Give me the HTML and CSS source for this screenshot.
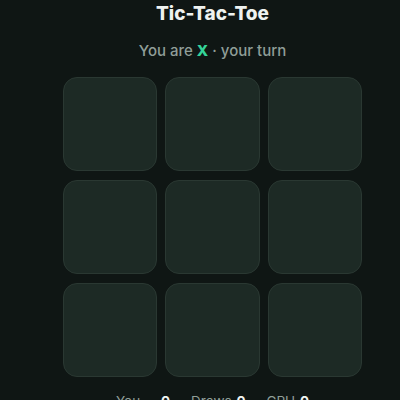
FILE: index.html
```html
<!DOCTYPE html>
<html lang="en">
<head>
  <meta charset="UTF-8" />
  <title>Tic-Tac-Toe</title>
  <link rel="stylesheet" href="styles.css">
</head>
<body>
  <div class="app">
    <h1>Tic-Tac-Toe</h1>
    <p class="status">You are <b class="mark">X</b> · your turn</p>

    <div class="board">
      <button class="cell"></button>
      <button class="cell"></button>
      <button class="cell"></button>
      <button class="cell"></button>
      <button class="cell"></button>
      <button class="cell"></button>
      <button class="cell"></button>
      <button class="cell"></button>
      <button class="cell"></button>
    </div>

    <div class="score">
      <span class="you">You <b>0</b></span>
      <span>Draws <b>0</b></span>
      <span>CPU <b>0</b></span>
    </div>
  </div>
</body>
</html>
```

FILE: styles.css
```css
:root {
  --bg: #0f1614;
  --cell: #1d2a25;
  --cell-border: #2a3832;
  --text: #eef2f0;
  --muted: #8f9e98;
  --accent: #34d399;
}
* { box-sizing: border-box; }
html, body {
  margin: 0;
  background: var(--bg);
  overflow: hidden;
}
body {
  font-family: Inter, 'Noto Sans', sans-serif;
  color: var(--text);
  padding-left: 12px;
}
.app {
  width: 401px;
  display: flex;
  flex-direction: column;
  align-items: center;
}
h1 {
  margin: 0;
  font-size: 19px;
  line-height: 28px;
  font-weight: 800;
}
.status {
  margin: 9px 0 0;
  font-size: 15px;
  line-height: 28px;
  font-weight: 500;
  color: var(--muted);
}
.status .mark {
  color: var(--accent);
  font-weight: 800;
}
.board {
  margin-top: 12px;
  width: 299px;
  display: grid;
  grid-template-columns: repeat(3, 1fr);
  grid-auto-rows: 94px;
  gap: 9px 8px;
}
.cell {
  background: var(--cell);
  border: 1px solid var(--cell-border);
  border-radius: 14px;
  padding: 0;
}
.score {
  margin-top: 16px;
  display: flex;
  gap: 21px;
  font-size: 13.5px;
  color: var(--muted);
}
.score b {
  color: var(--text);
  margin-left: 1px;
}
.score .you b {
  margin-left: 17px;
}
```
